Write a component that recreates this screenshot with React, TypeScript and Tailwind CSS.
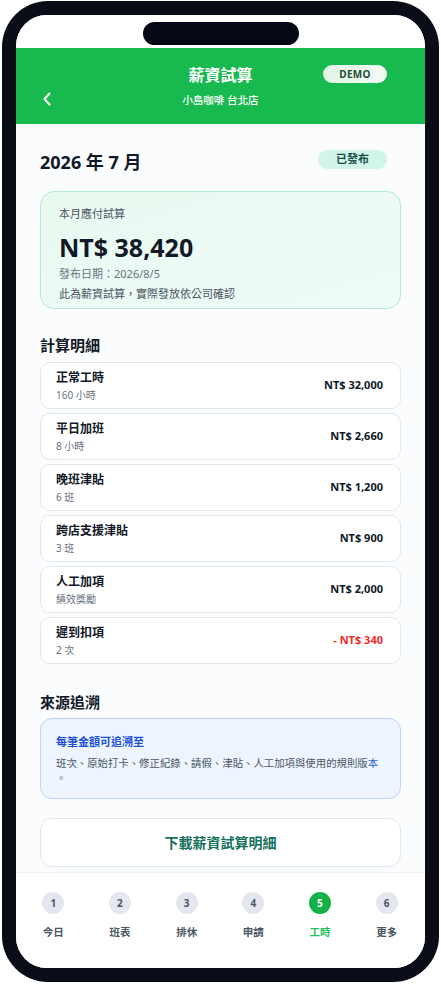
import React from "react";

const items = [
  { label: "正常工時", sub: "160 小時", amount: "NT$ 32,000", neg: false },
  { label: "平日加班", sub: "8 小時", amount: "NT$ 2,660", neg: false },
  { label: "晚班津貼", sub: "6 班", amount: "NT$ 1,200", neg: false },
  { label: "跨店支援津貼", sub: "3 班", amount: "NT$ 900", neg: false },
  { label: "人工加項", sub: "績效獎勵", amount: "NT$ 2,000", neg: false },
  { label: "遲到扣項", sub: "2 次", amount: "- NT$ 340", neg: true },
];

const nav = [
  { n: "1", label: "今日" },
  { n: "2", label: "班表" },
  { n: "3", label: "排休" },
  { n: "4", label: "申請" },
  { n: "5", label: "工時", active: true },
  { n: "6", label: "更多" },
];

export default function App() {
  return (
    <div className="w-[441px] h-[985px] bg-white pt-px pl-[2px] font-['Noto_Sans','Noto_Sans_CJK_TC',sans-serif]">
      <div className="w-[437px] h-[981px] rounded-[46px] bg-[#0a0d18] p-[14px]">
        <div className="w-full h-full rounded-[31px] bg-[#fbfcfd] overflow-hidden flex flex-col">
          {/* status bar */}
          <div className="h-[33px] shrink-0 bg-white flex justify-center pt-[7px]">
            <div className="w-[156px] h-[23px] rounded-full bg-[#050814]" />
          </div>
          {/* header */}
          <div className="h-[76px] shrink-0 bg-[#18b94e] grid grid-cols-[1fr_auto_1fr] px-[26px] pt-[16px]">
            <div className="flex items-end pb-[18px]">
              <svg width="10" height="14" viewBox="0 0 10 14" fill="none">
                <path d="M7.5 1.5L2.5 7l5 5.5" stroke="white" strokeWidth="2" strokeLinecap="round" strokeLinejoin="round" />
              </svg>
            </div>
            <div className="flex flex-col items-center">
              <div className="text-white font-bold text-[16px] leading-[22px]">薪資試算</div>
              <div className="text-white text-[10.5px] leading-[16px] mt-[6px] font-medium">小島咖啡 台北店</div>
            </div>
            <div className="flex justify-end items-start pt-[1px] pr-[12px]">
              <div className="w-[64px] h-[18px] rounded-full bg-gradient-to-r from-[#dff5e5] to-[#f2fbf4] flex items-center justify-center text-[10px] font-bold text-[#1f4d33] tracking-[0.3px]">
                DEMO
              </div>
            </div>
          </div>
          {/* content */}
          <div className="flex-1 overflow-hidden px-6">
            <div className="flex items-center justify-between pt-[25px] pr-[14px]">
              <div className="text-[18px] leading-[26px] font-bold text-[#111827]">2026 年 7 月</div>
              <div className="w-[69px] h-[19px] rounded-full bg-[#d2f5ea] flex items-center justify-center text-[11px] font-bold text-[#134e48] mb-[5px]">
                已發布
              </div>
            </div>
            <div className="mt-4 h-[118px] rounded-[14px] border border-[#b2eccf] bg-gradient-to-br from-[#e8f9f0] to-[#effbf6] px-[18px] pt-[14px]">
              <div className="text-[11px] leading-[16px] text-[#4b5563]">本月應付試算</div>
              <div className="mt-[9px] text-[25px] leading-[32px] font-bold text-[#111827]">NT$ 38,420</div>
              <div className="mt-[3px] text-[11px] leading-[16px] text-[#6b7280]">發布日期：2026/8/5</div>
              <div className="mt-[4px] text-[11px] leading-[16px] text-[#4b5563]">此為薪資試算，實際發放依公司確認</div>
            </div>
            <div className="mt-[26px] text-[15px] leading-[20px] font-bold text-[#111827]">計算明細</div>
            <div className="mt-[7px] flex flex-col gap-[4px]">
              {items.map((it) => (
                <div key={it.label} className="h-[47px] rounded-[10px] border border-[#e2e8f0] bg-white flex items-center justify-between pl-[15px] pr-[17px]">
                  <div className="flex flex-col">
                    <div className="text-[12px] leading-[18px] font-bold text-[#111827]">{it.label}</div>
                    <div className="mt-[1px] text-[10px] leading-[14px] text-[#6b7280]">{it.sub}</div>
                  </div>
                  <div className={"text-[11px] font-bold " + (it.neg ? "text-[#ef2b2b]" : "text-[#111827]")}>{it.amount}</div>
                </div>
              ))}
            </div>
            <div className="mt-[28px] text-[15px] leading-[20px] font-bold text-[#111827]">來源追溯</div>
            <div className="mt-[6px] h-[81px] rounded-[12px] border border-[#bcd6fb] bg-[#eef5ff] px-[15px] pt-[15px]">
              <div className="text-[11px] leading-[16px] font-bold text-[#1d4ed8]">每筆金額可追溯至</div>
              <div className="mt-[6px] text-[10.4px] leading-[15px] text-[#4b5563]">
                <div className="whitespace-nowrap">
                  班次、原始打卡、修正紀錄、請假、津貼、人工加項與使用的規則版<span className="text-[#2f5fd0]">本</span>
                </div>
                <div>。</div>
              </div>
            </div>
            <div className="mt-[19px] h-[49px] rounded-[12px] border border-[#e2e8f0] bg-white flex items-center justify-center text-[14px] font-bold text-[#16705c]">
              下載薪資試算明細
            </div>
          </div>
          {/* bottom nav */}
          <div className="h-[96px] shrink-0 border-t border-[#eef1f5] bg-white grid grid-cols-6 pl-[4px] pr-[5px] pt-[19px]">
            {nav.map((n) => (
              <div key={n.n} className="flex flex-col items-center">
                <div className={"w-[22px] h-[22px] rounded-full flex items-center justify-center text-[10px] font-bold " + (n.active ? "bg-[#13b146] text-white" : "bg-[#e4e7ee] text-[#4b5563]")}>
                  {n.n}
                </div>
                <div className={"mt-[11px] text-[10.5px] leading-[14px] font-bold " + (n.active ? "text-[#22c05a]" : "text-[#4b5563]")}>{n.label}</div>
              </div>
            ))}
          </div>
        </div>
      </div>
    </div>
  );
}
